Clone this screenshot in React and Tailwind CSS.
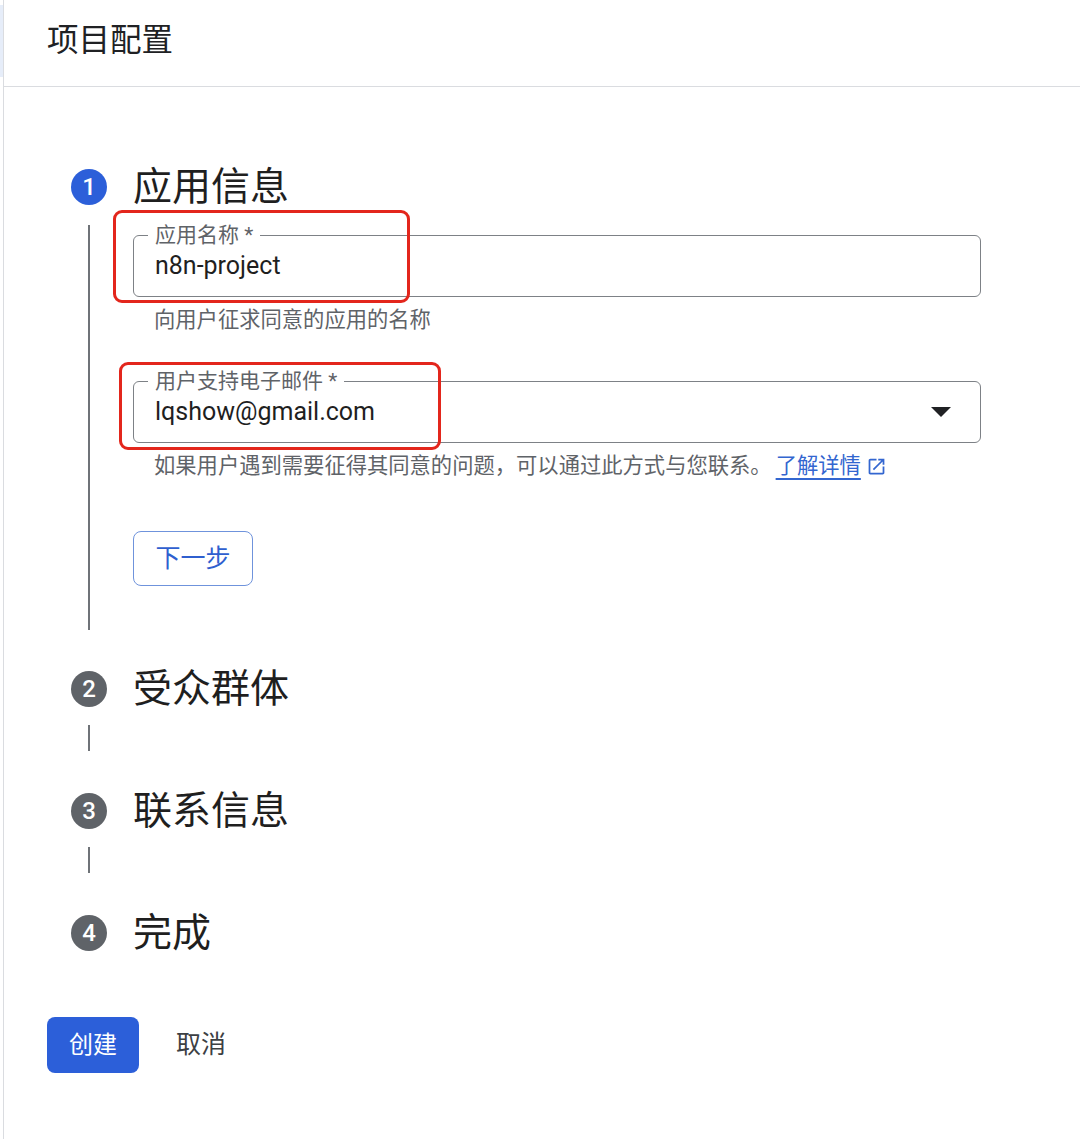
import React from 'react';

const font = { fontFamily: 'Roboto, "Noto Sans CJK SC", sans-serif' };

function StepHeader({ n, title, active }) {
  return (
    <div className="flex h-[48px] items-center">
      <div
        className={`flex h-[36px] w-[36px] shrink-0 items-center justify-center rounded-full text-[24px] font-medium text-white ${
          active ? 'bg-[#2c5fd9]' : 'bg-[#5f6368]'
        }`}
      >
        {n}
      </div>
      <div className="ml-[26px] text-[39px] leading-none text-[#1f1f1f]">{title}</div>
    </div>
  );
}

function Field({ label, value, dropdown, mark }) {
  return (
    <div className="relative">
      <div className="relative flex h-[62px] items-center rounded-[6px] border border-[#7d8186] pl-[21px] pr-[29px]">
        <span className="absolute left-[14px] top-[-14px] bg-white px-[7px] text-[21px] leading-[26px] text-[#5f6368]">
          {label}
        </span>
        <span className="flex-1 text-[25px] text-[#1f1f1f]">{value}</span>
        {dropdown && (
          <svg width="20" height="10" viewBox="0 0 20 10">
            <polygon points="0,0 20,0 10,10" fill="#202124" />
          </svg>
        )}
      </div>
      <div
        className="pointer-events-none absolute rounded-[9px] border-[3px] border-[#e3261c]"
        style={mark}
      />
    </div>
  );
}

function Helper({ children }) {
  return <div className="mt-[9px] pl-[21px] text-[21.3px] leading-[28px] text-[#5f6368]">{children}</div>;
}

function ShortStep({ n, title, line }) {
  return (
    <div>
      <StepHeader n={n} title={title} />
      {line ? (
        <div className="flex w-[36px] justify-center pb-[36px] pt-[12px]">
          <div className="h-[26px] w-[1.5px] bg-[#6f7378]" />
        </div>
      ) : null}
    </div>
  );
}

export default function App() {
  return (
    <div className="flex min-h-[1139px] bg-white" style={font}>
      <div className="w-[3px] shrink-0">
        <div className="mt-[5px] h-[72px] bg-[#e6edf9]" />
      </div>
      <div className="flex-1 border-l border-[#dadce0]">
        <div className="flex h-[87px] items-center border-b border-[#dadce0] pb-[4px] pl-[43px]">
          <h1 className="text-[31.5px] text-[#202124]">项目配置</h1>
        </div>

        <div className="mt-[76px] pl-[67px] pr-[99px]">
          <StepHeader n="1" title="应用信息" active />
          <div className="flex">
            <div className="flex w-[36px] shrink-0 justify-center pb-[35px] pt-[14px]">
              <div className="w-[1.5px] bg-[#6f7378]" />
            </div>
            <div className="ml-[26px] flex-1 pb-[79px] pt-[24px]">
              <Field
                label="应用名称 *"
                value="n8n-project"
                mark={{ left: -20, top: -25, width: 297, height: 93 }}
              />
              <Helper>向用户征求同意的应用的名称</Helper>
              <div className="mt-[47px]">
                <Field
                  label="用户支持电子邮件 *"
                  value="lqshow@gmail.com"
                  dropdown
                  mark={{ left: -14, top: -19, width: 322, height: 88 }}
                />
              </div>
              <Helper>
                如果用户遇到需要征得其同意的问题，可以通过此方式与您联系。
                <a className="ml-[4px] inline-flex items-center text-[#3366d0]">
                  <span className="underline decoration-[1.5px] underline-offset-[5px]">了解详情</span>
                  <svg className="ml-[5px]" width="21" height="21" viewBox="0 0 24 24" fill="#3366d0">
                    <path d="M19 19H5V5h7V3H5c-1.11 0-2 .9-2 2v14c0 1.1.89 2 2 2h14c1.1 0 2-.9 2-2v-7h-2v7zM14 3v2h3.59l-9.83 9.83 1.41 1.41L19 6.41V10h2V3h-7z" />
                  </svg>
                </a>
              </Helper>
              <button className="mt-[51px] flex h-[55px] w-[120px] items-center justify-center rounded-[8px] border-[1.5px] border-[#6f93dc] text-[25px] text-[#2f5fcf]">
                下一步
              </button>
            </div>
          </div>
          <ShortStep n="2" title="受众群体" line />
          <ShortStep n="3" title="联系信息" line />
          <ShortStep n="4" title="完成" />
        </div>

        <div className="mt-[60px] flex items-center pl-[43px]">
          <button className="flex h-[56px] w-[92px] items-center justify-center rounded-[8px] bg-[#2c5fd9] text-[24px] text-white">
            创建
          </button>
          <button className="ml-[37px] text-[25px] text-[#3c4043]">取消</button>
        </div>
      </div>
    </div>
  );
}
